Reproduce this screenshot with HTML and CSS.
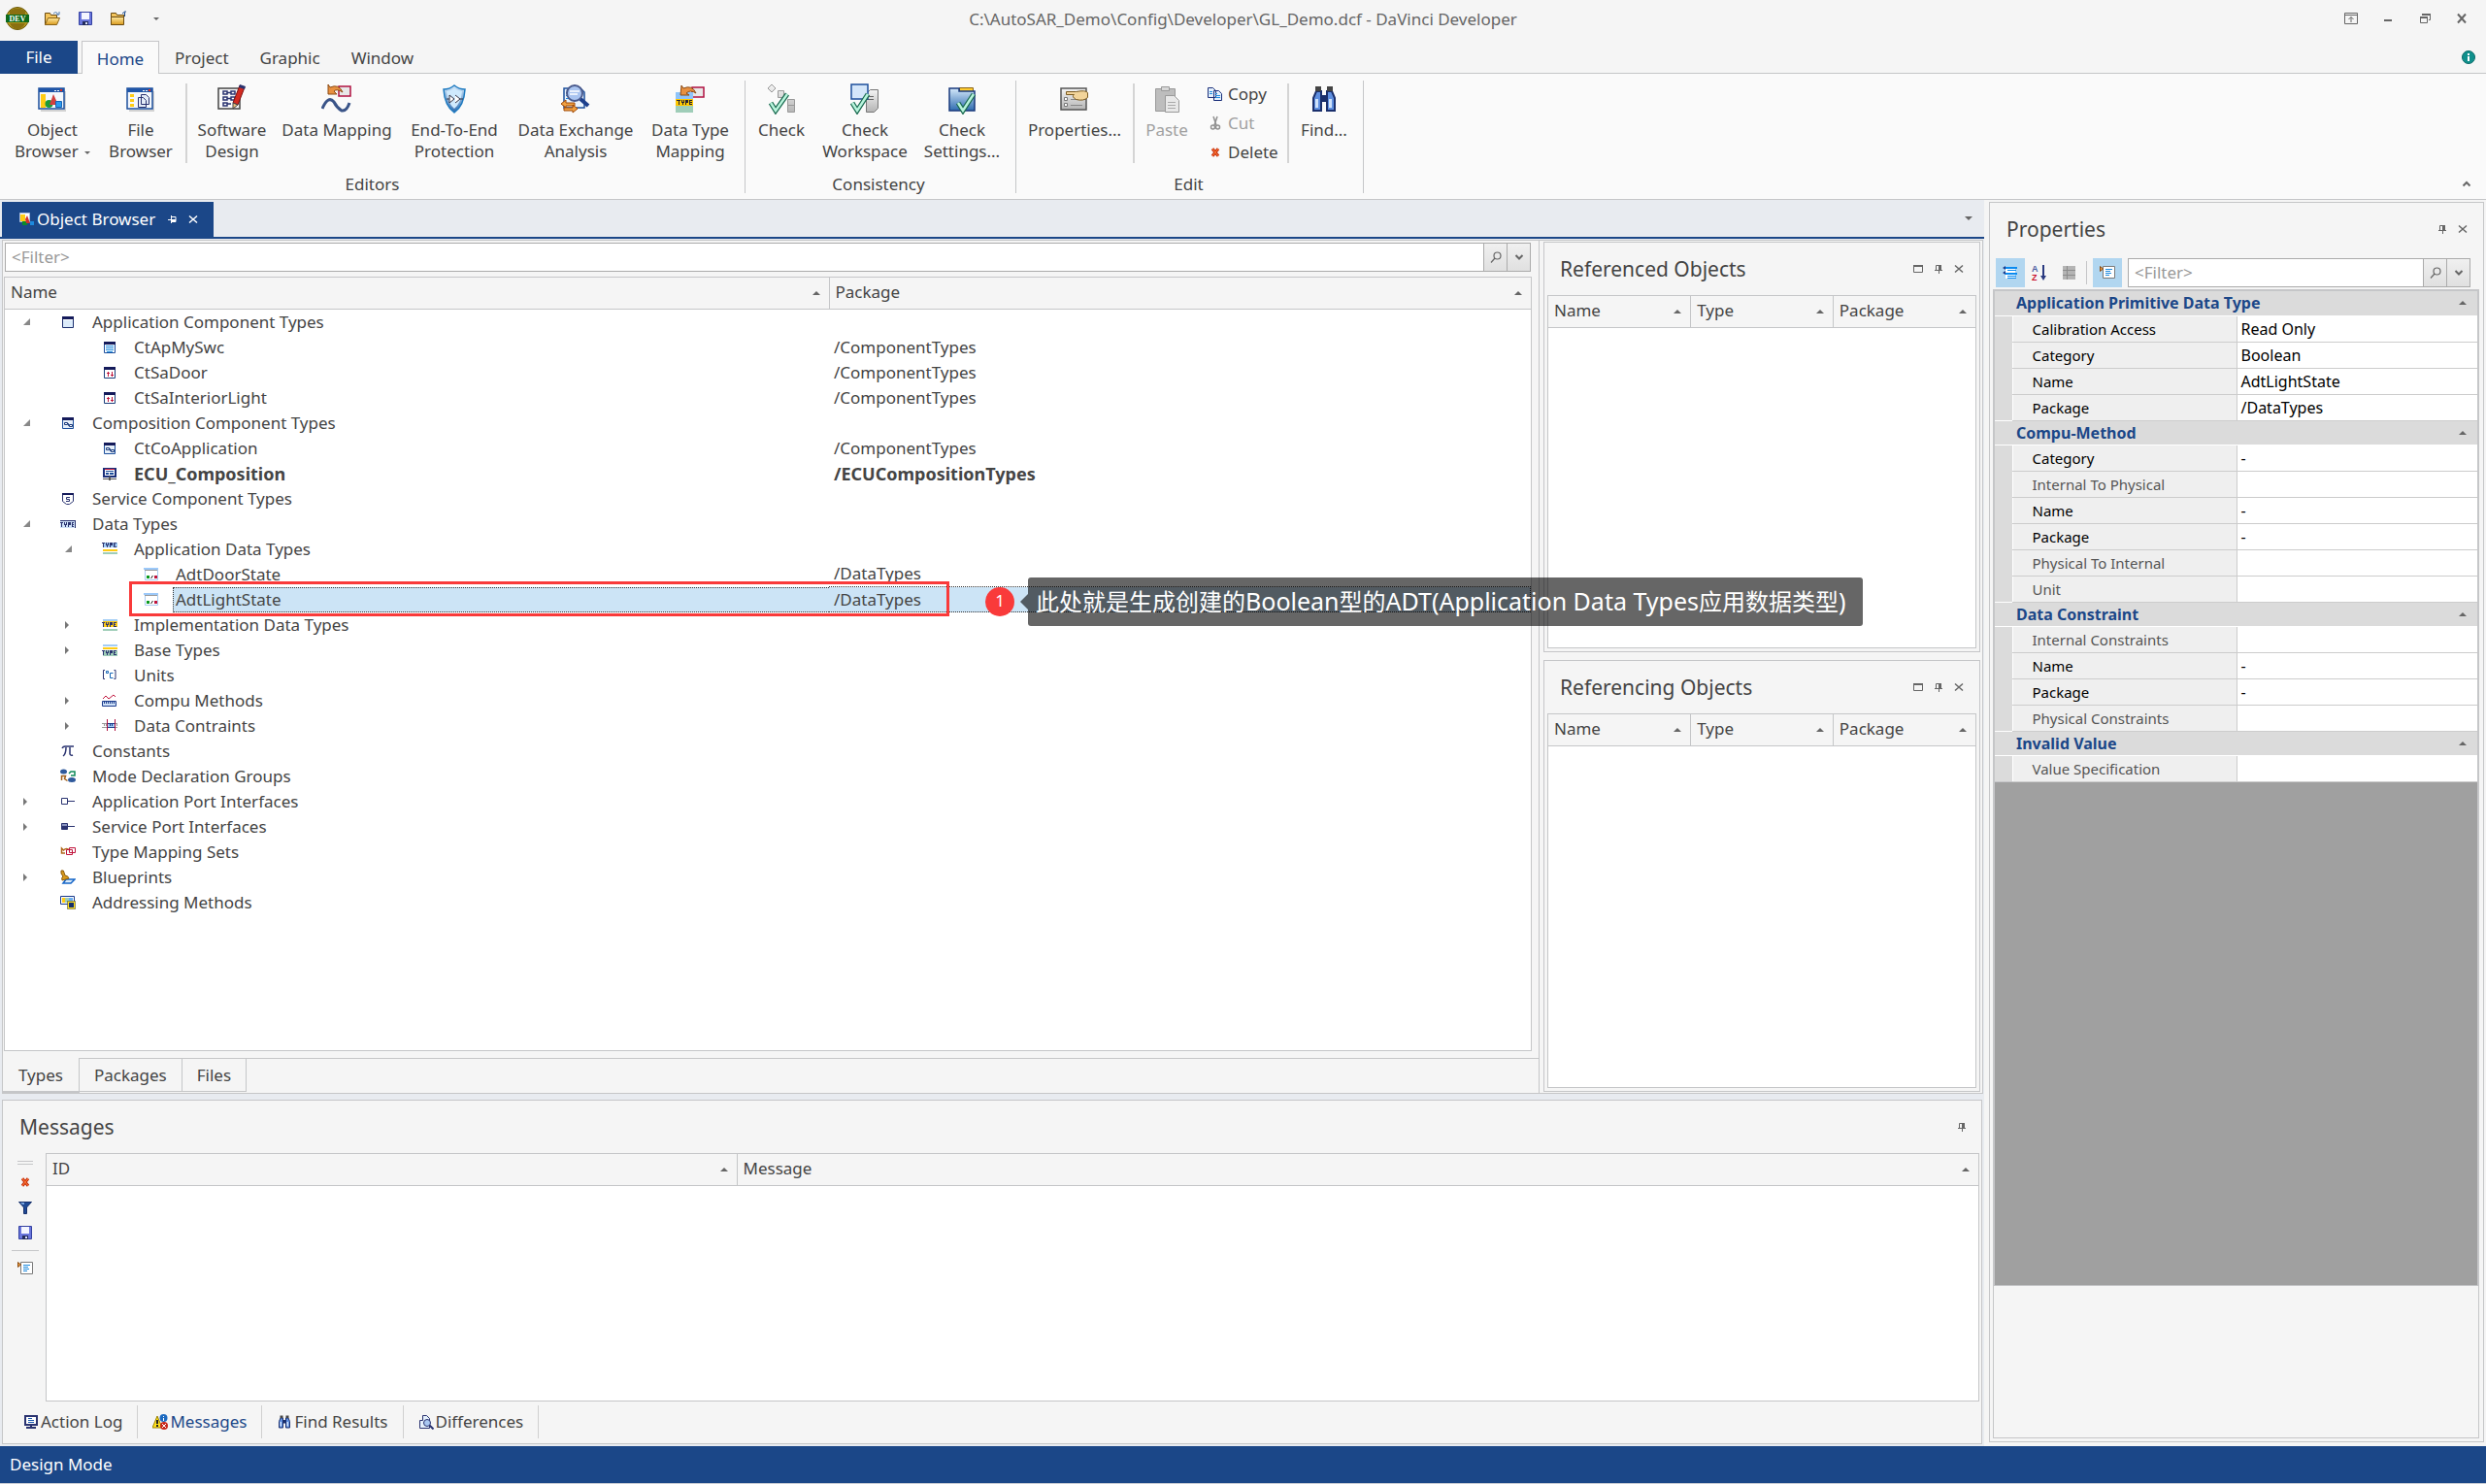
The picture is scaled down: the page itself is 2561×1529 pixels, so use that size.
FILE: index.html
```html
<!DOCTYPE html>
<html lang="en">
<head>
<meta charset="utf-8">
<title>C:\AutoSAR_Demo\Config\Developer\GL_Demo.dcf - DaVinci Developer</title>
<link rel="stylesheet" href="styles.css">
</head>
<body>
<svg class="defs" aria-hidden="true">
  <linearGradient id="steel" x1="0" y1="0" x2="0" y2="1"><stop offset="0" stop-color="#d4e8fa"/><stop offset="1" stop-color="#2f6cb0"/></linearGradient>
  <linearGradient id="grey" x1="0" y1="0" x2="0" y2="1"><stop offset="0" stop-color="#f4f4f4"/><stop offset="1" stop-color="#b5b5b5"/></linearGradient>
  <linearGradient id="gold" x1="0" y1="0" x2="0" y2="1"><stop offset="0" stop-color="#ffe9a0"/><stop offset="1" stop-color="#d99a1c"/></linearGradient>

  <!-- small icons, 16 x 16 -->
  <symbol id="app" viewBox="0 0 16 16"><path fill="#fff" stroke="#1c2f6e" d="M2.500 2.500h11v11h-11z"/><path fill="#dcecfb" d="M3 6h10v7H3z"/><path fill="#141a5a" d="M2 2h12v3H2z"/></symbol>
  <symbol id="swc" viewBox="0 0 16 16"><path fill="#fff" stroke="#1d4f9c" d="M2.500 2.500h11v11h-11z"/><path fill="#141a5a" d="M2 2h12v3H2z"/><path fill="#1d8ade" d="M4 6h8v1H4zM4 8h8v1H4zM4 10h8v1H4zM5 12h6v1H5z"/></symbol>
  <symbol id="sa" viewBox="0 0 16 16"><path fill="#fff" stroke="#1d3f7c" d="M2.500 2.500h11v11h-11z"/><path fill="#141a5a" d="M2 2h12v3H2z"/><path fill="#c0143c" d="M6 7h1v5H6zM5 8h3v1H5zM10 7h1v5h-1zM9 10h3v1H9z"/></symbol>
  <symbol id="co" viewBox="0 0 16 16"><path fill="#e6f0fa" stroke="#1d4f9c" d="M2.500 2.500h11v11h-11z"/><path fill="#141a5a" d="M2 2h12v3H2z"/><path fill="#fff" stroke="#1a3a7c" d="M4.500 7.500h3v2h-3zM9.500 9.500h3v2h-3zM7.500 8.500h1v2h1"/></symbol>
  <symbol id="ecu" viewBox="0 0 16 16"><path fill="#fff" stroke="#1a2f7a" stroke-width="2" d="M2 3h12v8H2z"/><path fill="#1d4f9c" d="M4 5h8v1H4zM4 7h3v2H4zM8 7h4v2H8z"/><path fill="#c0143c" d="M3 3h10v1H3z"/><path fill="#555" d="M1 13h14v1H1zM7 11h2v4H7z"/></symbol>
  <symbol id="svc" viewBox="0 0 16 16"><path fill="#fff" stroke="#2a3370" d="M2.500 2.500h11v8l-4 3h-3l-4-3z"/><path fill="#141a5a" d="M2 2h12v2H2z"/><path fill="none" stroke="#2a3370" d="M10 6.500H6.500v2h3v2H6"/></symbol>
  <symbol id="type" viewBox="0 0 16 16"><path fill="#cfe2f8" d="M0 4h16v8H0z"/><path fill="#2a3370" d="M0 4h16v1H0zM15 4h1v8h-1zM0 6h3v1H2v4H1V7H0zM4 6h1v2h1V6h1v3H6v2H5V9H4zM8 6h3v3H9v2H8zM12 6h2v1h-1v1h1v1h-1v1h1v1h-2z"/></symbol>
  <symbol id="adt" viewBox="0 0 16 16"><path fill="#a3cdf5" d="M1 1h15v5H1z"/><path fill="#ffcc14" d="M1 8h15v2H1z"/><path fill="#9fcdb8" d="M1 11h15v2H1z"/><path fill="#2a3370" d="M0 1h3v1H2v4H1V2H0zM4 1h1v2h1V1h1v3H6v2H5V4H4zM8 1h3v3H9v2H8zM12 1h3v1h-2v1h1v1h-1v1h2v1h-3z"/></symbol>
  <symbol id="idt" viewBox="0 0 16 16"><path fill="#a3cdf5" d="M1 2h15v2H1z"/><path fill="#ffcc14" d="M1 4h15v6H1z"/><path fill="#9fcdb8" d="M1 12h15v2H1z"/><path fill="#2a3370" d="M0 5h3v1H2v4H1V6H0zM4 5h1v2h1V5h1v3H6v2H5V8H4zM8 5h3v3H9v2H8zM12 5h3v1h-2v1h1v1h-1v1h2v1h-3z"/></symbol>
  <symbol id="base" viewBox="0 0 16 16"><path fill="#a3cdf5" d="M1 2h15v2H1z"/><path fill="#ffcc14" d="M1 5h15v2H1z"/><path fill="#9fcdb8" d="M1 8h15v6H1z"/><path fill="#2a3370" d="M0 8h3v1H2v4H1V9H0zM4 8h1v2h1V8h1v3H6v2H5v-2H4zM8 8h3v3H9v2H8zM12 8h3v1h-2v1h1v1h-1v1h2v1h-3z"/></symbol>
  <symbol id="prim" viewBox="0 0 16 16"><path fill="#fff" stroke="#a9cdf2" d="M1.500 1.500h13v12h-13z"/><path fill="#9cc9fa" d="M0 1h15v2H0z"/><path fill="#999" d="M1 3h13v1H1z"/><path fill="#0a9a1e" d="M3 9h3v3H3z"/><path fill="#c0143c" d="M11 9h3v3h-3z"/><path stroke="#222" d="M7.500 12l2-3"/></symbol>
  <symbol id="unit" viewBox="0 0 16 16"><path fill="none" stroke="#2a3370" d="M3 2.500H1.500v9H3M12.500 2.500H14v9h-1.500"/><path fill="none" stroke="#1565b8" d="M4.500 3.500h2v2h-2zM11.500 5.500h-3v5h3"/></symbol>
  <symbol id="compu" viewBox="0 0 16 16"><path fill="none" stroke="#c0143c" d="M1 6l3-3 3 3 5-4 2 2"/><path fill="#cfe2f8" stroke="#1a3a8c" d="M.5 8.500h14v5H.5z"/><path stroke="#1a3a8c" d="M2.500 9v2M4.500 9v2M6.500 9v2M8.500 9v2M10.500 9v2M12.500 9v2"/></symbol>
  <symbol id="constr" viewBox="0 0 16 16"><path fill="#a3cdf5" d="M6 5h7v4H6z"/><path stroke="#999" fill="none" d="M0 5.500h16M0 9.500h16M2.500 6v2M4.500 6v2M15.500 6v2"/><path stroke="#1a3a8c" fill="none" d="M6 5.500h7M8.500 6v2M10.500 6v2M6 9.500h7"/><path stroke="#b01040" d="M5.500 1v12M13.500 1v12"/></symbol>
  <symbol id="pi" viewBox="0 0 16 16"><path fill="none" stroke="#2a3370" stroke-width="1.500" d="M2 5q1-2 3-2h9M6 4q0 7-3 9M10 4v7q1 2 3 1"/></symbol>
  <symbol id="mode" viewBox="0 0 16 16"><ellipse cx="3.500" cy="3" rx="3.500" ry="2.500" fill="#2f5a9c"/><ellipse cx="12" cy="11.500" rx="4" ry="2.500" fill="#2f5a9c"/><path fill="none" stroke="#0f8a5a" stroke-width="1.500" d="M9 5l2-2h4v4h-4"/><path fill="none" stroke="#a0601c" stroke-width="1.500" d="M1.500 12V7.500h4l-1 3 3 2"/></symbol>
  <symbol id="port" viewBox="0 0 16 16"><path fill="#fff" stroke="#2a3370" d="M1.500 4.500h6v6h-6zM8 7.500h7"/></symbol>
  <symbol id="sport" viewBox="0 0 16 16"><path fill="#2a3370" stroke="#2a3370" d="M1.500 4.500h6v6h-6zM8 7.500h7"/><path fill="#8a94c0" d="M2 5h5v2H2z"/></symbol>
  <symbol id="tms" viewBox="0 0 16 16"><path fill="none" stroke="#b0681c" stroke-width="1.500" d="M5 9H1.500V4l2 2q3-3 6 0"/><path fill="#fff" stroke="#c0143c" d="M9.500 3.500h6v5h-6zM6.500 5.500h6v5h-6z"/></symbol>
  <symbol id="blue" viewBox="0 0 16 16"><path fill="#dcecfb" stroke="#1565c8" stroke-width="1.500" d="M3 14l3-4h9l-4 4z"/><path fill="#d99a1c" stroke="#8a5a0c" d="M1 1q3-1 3 2l1 3q3 0 4 3l-7 2q-1-3 1-4L1 4z"/></symbol>
  <symbol id="addr" viewBox="0 0 16 16"><path fill="#fff" stroke="#1a3a8c" d="M.5 1.500h14v8H.5z"/><path fill="#ffcc14" d="M2 3h3v5H2z"/><path fill="#9fcdb8" d="M5 3h4v5H5z"/><path fill="#6aaef0" d="M9 3h4v5H9z"/><path fill="#ffe01a" stroke="#333" stroke-dasharray="1 1" d="M7.500 6.500h8v8h-8z"/><path fill="#16306c" d="M9 8h5v5H9z"/></symbol>
  <symbol id="open" viewBox="0 0 16 16"><path fill="#f4c55c" stroke="#6a4a10" d="M.5 14.500v-12h5l1 2h6v3"/><path fill="url(#gold)" stroke="#8a6418" d="M.5 14.500l3-7h12l-3 7z"/><path fill="none" stroke="#4a7ab0" d="M9 3q3-3 5 1M15 1v3h-3"/></symbol>
  <symbol id="close-folder" viewBox="0 0 16 16"><path fill="#f4c55c" stroke="#6a4a10" d="M.5 14.500v-12h5l1 2h7v3"/><path fill="url(#gold)" stroke="#6a4a10" d="M.5 6.500h13v8H.5z"/><path fill="none" stroke="#1a4a8c" d="M14.500 6V1.500M12 3l2.500-2H16"/></symbol>
  <symbol id="save" viewBox="0 0 16 16"><path fill="#6a76dc" stroke="#3340a0" d="M1.500 1.500h13v13h-13z"/><path fill="#f4f6ff" d="M4 2h8v7H4z"/><path fill="#222c5c" d="M5 11h6v4H5z"/><path fill="#dfe4ff" d="M8 12h2v2H8z"/></symbol>
  <symbol id="del" viewBox="0 0 16 16"><path fill="none" stroke="#c02808" stroke-width="4" d="M4 3l8 10M12 3L4 13"/><path fill="none" stroke="#ff7a38" stroke-width="1.500" d="M4 3l8 10M12 3L4 13"/></symbol>
  <symbol id="copy" viewBox="0 0 16 16"><path fill="#e4f0fc" stroke="#1a2f7a" d="M.5 1.500h5l3 3v7h-8zM6.500 4.500h5l3 3v7h-8z"/><path stroke="#1d8ade" d="M2 5.500h3M2 7.500h3M8 9.500h5M8 11.500h5M8 7.500h2"/></symbol>
  <symbol id="cut" viewBox="0 0 16 16"><path fill="none" stroke="#909090" stroke-width="1.500" d="M6 1l3 9M10 1L7 10"/><circle cx="5.500" cy="12" r="2" fill="none" stroke="#909090" stroke-width="1.500"/><circle cx="10.500" cy="12" r="2" fill="none" stroke="#909090" stroke-width="1.500"/></symbol>
  <symbol id="funnel" viewBox="0 0 16 16"><path fill="#1f4a94" stroke="#16306c" d="M1.500 2.500h13L9.500 8v6.500h-3V8z"/><path fill="#7aa6e0" d="M3 3h4v2H5z"/></symbol>
  <symbol id="doc" viewBox="0 0 16 16"><path fill="#fff" stroke="#7a7a7a" d="M3.500 1.500h12v12h-12z"/><path stroke="#1d8ade" d="M6 4.500h7M6 6.500h5M6 8.500h6M6 10.500h4"/><path fill="#f0a040" stroke="#8a4a10" d="M.5 1.500l3 2.500-3 2.500z"/></symbol>
  <symbol id="log" viewBox="0 0 16 16"><path fill="#fff" stroke="#2a3370" stroke-width="2" d="M2 2h12v9H2z"/><path stroke="#1d5ab0" d="M5 4.500h4M5 6.500h6M5 8.500h6"/><path fill="#2a3370" d="M7 11h2v2H7zM3 13h10v2H3z"/></symbol>
  <symbol id="msg" viewBox="0 0 16 16"><path fill="#ffe01a" stroke="#9a8000" d="M5 2l5 12H0z"/><path stroke="#222" stroke-width="2" d="M5 6v4M5 11v2"/><circle cx="11.500" cy="4" r="4" fill="#1d6ac0"/><path fill="#fff" d="M11 2h1v1h-1zM11 4h1v3h-1z"/><circle cx="12" cy="12" r="4" fill="#c8281c"/><path stroke="#fff" d="M10 10l4 4M14 10l-4 4"/></symbol>
  <symbol id="diff" viewBox="0 0 16 16"><path fill="#e4f0fc" stroke="#2a3370" d="M1.500 14.500V6.500h3v-5h4l3 3v10z"/><circle cx="9" cy="9" r="3.500" fill="#a9c8f2" stroke="#2a3370"/><path stroke="#2a3370" stroke-width="2" d="M11.500 11.500l4 4"/></symbol>
  <symbol id="cats" viewBox="0 0 16 16"><path fill="#fff" d="M3 2h10v12H3z"/><path stroke="#0a8af0" stroke-width="2" d="M3 3h12M3 9h12"/><path stroke="#0a8af0" d="M5 5.500h9M5 11.500h9M5 13.500h9"/><path fill="#1a3a8c" d="M0 3l3-2v4zM0 8l3-2v4z"/></symbol>
  <symbol id="pages" viewBox="0 0 16 16"><path fill="#b4b4b4" d="M2 1h13v14H2z"/><path stroke="#8c8c8c" fill="none" d="M2 5.500h13M2 10.500h13M6.500 1v14"/></symbol>
  <symbol id="mag" viewBox="0 0 16 16"><circle cx="9.500" cy="6.500" r="3.500" fill="none" stroke="#666" stroke-width="1.200"/><path stroke="#666" stroke-width="1.200" d="M7 9l-4 4.500"/></symbol>
  <symbol id="down" viewBox="0 0 16 16"><path fill="none" stroke="#666" stroke-width="2" d="M4.500 6L8 9.500 11.500 6"/></symbol>
  <symbol id="x" viewBox="0 0 16 16"><path fill="none" stroke="currentColor" stroke-width="1.500" d="M4 4.500l8 7M12 4.500l-8 7"/></symbol>
  <symbol id="pin" viewBox="0 0 16 16"><path fill="none" stroke="currentColor" d="M5.500 9V4.500h4V9M4 9.500h8M8.500 10v3"/><path fill="currentColor" d="M8 4h3v5H8z"/></symbol>
  <symbol id="pinl" viewBox="0 0 16 16"><path fill="none" stroke="currentColor" d="M8 5.500h4v5H8M7.500 4v8M4 8.500h3"/><path fill="currentColor" d="M8 8h4v2H8z"/></symbol>
  <symbol id="maxi" viewBox="0 0 16 16"><path fill="none" stroke="currentColor" d="M3.500 4.500h9v7h-9z"/><path fill="currentColor" d="M3 4h10v2H3z"/></symbol>
  <symbol id="bino" viewBox="0 0 32 32"><path fill="#5f8fe0" stroke="#1a2f6c" stroke-width="2" d="M5 28V15l3-7h5v20zM19 28V8h5l3 7v13z"/><path fill="#1a2f6c" d="M13 12h6v7h-6z"/><path fill="#444" d="M7 3h6v5H7zM19 3h6v5h-6z"/><path fill="#cfe2fa" d="M7 16h3v9H7zM21 16h3v9h-3z"/></symbol>
  <symbol id="ob16" viewBox="0 0 16 16"><path fill="#fff" stroke="#a9bce0" d="M1.500 1.500h10v9h-10z"/><path fill="#ffcc14" d="M2 3h5v7H2z"/><path fill="#0a8a2a" d="M4 10h5v4H4z"/><path fill="#d03030" d="M7 8l2-4 3 8H8z"/><path fill="#1d8ade" d="M12 10h4v4h-4z"/></symbol>

  <!-- ribbon icons, 32 x 32 -->
  <symbol id="ob" viewBox="0 0 32 32"><path fill="#aaa" d="M4 29h26V8h-2v19H4z" opacity=".5"/><path fill="#f4f8fd" stroke="#1d4f9c" stroke-width="1.500" d="M2 5h26v21H2z"/><path fill="#1f55a8" d="M2 5h26v4H2z"/><path fill="#fff" d="M18 7h2v1h-2zM21 7h2v1h-2z"/><path fill="#e03020" d="M24 6h2v2h-2z"/><path fill="#ffcc14" d="M4 11h5v14H4z"/><circle cx="12.500" cy="21" r="4" fill="#1a9a3a"/><path fill="#d04040" d="M17 11l5 11h-9z"/><path fill="#2a9af0" stroke="#1565b8" d="M19.500 18.500h6v6h-6z"/></symbol>
  <symbol id="fb" viewBox="0 0 32 32"><path fill="#aaa" d="M4 29h26V8h-2v19H4z" opacity=".5"/><path fill="#f4f8fd" stroke="#1d4f9c" stroke-width="1.500" d="M2 5h26v21H2z"/><path fill="#1f55a8" d="M2 5h26v4H2z"/><path fill="#fff" d="M18 7h2v1h-2zM21 7h2v1h-2z"/><path fill="#e03020" d="M24 6h2v2h-2z"/><path fill="#ffcc14" d="M5 11h4v3H5zM5 16h4v3H5zM5 21h4v3H5z"/><path fill="#e4ecf8" stroke="#2a3370" d="M16.500 11.500h5l3 3v7h-8zM13.500 14.500h5l3 3v7h-8z"/></symbol>
  <symbol id="sd" viewBox="0 0 32 32"><path fill="#fafafa" stroke="#444" stroke-width="1.500" d="M2 5h22v21H2z"/><path fill="#fff" stroke="#2a3370" stroke-width="1.500" d="M7 8h4v3H7zM7 14h4v3H7zM7 20h4v3H7zM15 8h4v3h-4zM15 14h4v3h-4zM11 9.500h4M11 15.500h4M11 21h4"/><path fill="#d42a20" stroke="#7a1010" d="M24 2l5 2-7 18-5-2z"/><path fill="#e8c080" stroke="#444" d="M17 20l5 2-5 4z"/><path fill="#2a3370" d="M24 1l6 2-1 3-6-2z"/></symbol>
  <symbol id="dm" viewBox="0 0 32 32"><path fill="#e8e8e8" stroke="#b01040" stroke-width="1.500" d="M18 3h12v10H18z"/><path fill="#e89040" stroke="#8a4a14" d="M7 1l2 3q9-4 13 5-6-4-9-1l3 3H7z"/><path fill="none" stroke="#3a5488" stroke-width="3" d="M1 26q6-14 12-7 3 6 8 9 5 1 8-8"/></symbol>
  <symbol id="ee" viewBox="0 0 32 32"><path fill="url(#steel)" stroke="#1d7ac0" stroke-width="1.500" d="M16 2q5 4 11 4-1 17-11 24Q6 23 5 6q6 0 11-4z"/><path fill="#cfeafd" d="M16 5q4 3 8 3-1 12-8 18-7-6-8-18 4 0 8-3z"/><path fill="#fff" stroke="#334" d="M8 16h3m0-4v8l5-4zM17 12l5 4-5 4M22 16h3"/></symbol>
  <symbol id="de" viewBox="0 0 32 32"><path fill="#eaf4fe" stroke="#1d4f9c" stroke-width="1.500" d="M4 5h17l4 4v16H4z"/><path stroke="#1d8ade" d="M6 9.500h8M6 12.500h8M6 15.500h8"/><circle cx="15" cy="10" r="8" fill="#a9c4f0" stroke="#4a5a8c" stroke-width="2"/><path stroke="#fff" stroke-width="1.500" d="M10 8h10M10 11h8"/><path stroke="#1d3f8c" stroke-width="4" d="M21 16l8 7"/><path fill="#f0a040" stroke="#a04a08" d="M1 21l5-4v3h9v3H6v2zM18 26l-5-4v3H4v3h9v2z"/></symbol>
  <symbol id="dt" viewBox="0 0 32 32"><path fill="#e8e8e8" stroke="#b01040" stroke-width="1.500" d="M18 4h12v10H18z"/><path fill="#8fc4fa" d="M1 9h18v7H1z"/><path fill="#ffc800" d="M1 16h18v7H1z"/><path fill="#9fcdb8" d="M1 23h18v7H1z"/><path fill="#223" d="M2 17h4v1H5v4H4v-4H2zM7 17h1v2h1v-2h1v3H9v2H8v-2H7zM11 17h3v3h-2v2h-1zM15 17h3v1h-2v1h2v1h-2v1h2v1h-3z"/><path fill="#e89040" stroke="#8a4a14" d="M7 2l2 3q9-4 13 5-6-4-10 0l3 2H6z"/></symbol>
  <symbol id="ck" viewBox="0 0 32 32"><path fill="url(#grey)" stroke="#999" d="M6 1l4 4-4 4-4-4zM12.500 7.500h6v7h-6zM22.500 16.500h7v13h-7zM22.500 22.500h7"/><path fill="none" stroke="#1a6a50" stroke-width="5" d="M5 20l5 8L22 11"/><path fill="none" stroke="#b8f4dc" stroke-width="2.500" d="M5 20l5 8L22 11"/></symbol>
  <symbol id="cw" viewBox="0 0 32 32"><path fill="url(#grey)" stroke="#777" d="M17.500 10.500l4-4h8v19l-4 4h-8z"/><path stroke="#666" d="M18 13.500h7M18 16.500h7"/><path fill="#d4e6fa" stroke="#1d4f9c" stroke-width="1.500" d="M2 1h17v15H2z"/><path fill="none" stroke="#1a6a50" stroke-width="5" d="M3 20l5 8L19 11"/><path fill="none" stroke="#b8f4dc" stroke-width="2.500" d="M3 20l5 8L19 11"/></symbol>
  <symbol id="cs" viewBox="0 0 32 32"><path fill="#ffcc30" stroke="#8a6418" d="M13.500 4.500h14v4h-14z"/><path fill="url(#steel)" stroke="#1a3a7c" stroke-width="1.500" d="M3 5h10v3h16v20H3z"/><path fill="none" stroke="#1a6a50" stroke-width="5" d="M12 20l5 8L28 11"/><path fill="none" stroke="#b8f4dc" stroke-width="2.500" d="M12 20l5 8L28 11"/></symbol>
  <symbol id="pr" viewBox="0 0 32 32"><path fill="url(#grey)" stroke="#555" stroke-width="1.500" d="M2 5h26v22H2z"/><path fill="#fff" stroke="#777" d="M5.500 14.500h3v3h-3zM5.500 20.500h3v3h-3z"/><path stroke="#888" d="M12 16.500h12M12 22.500h12"/><path fill="#f2d49a" stroke="#7a5a20" d="M7.500 8.500h10q10-2 12 1v5q-4 4-12 2-5-3-2-5h-8z"/></symbol>
  <symbol id="pa" viewBox="0 0 32 32"><path fill="#bdbdbd" stroke="#999" d="M4.500 5.500h20v23h-20z"/><path fill="#d8d8d8" stroke="#999" d="M10.500 3.500h8v4h-8z"/><path fill="#e8e8e8" stroke="#999" d="M14.500 12.500h9l5 5v12h-14z"/><path stroke="#aaa" d="M17 19.500h8M17 22.500h8M17 25.500h8"/></symbol>
</svg>

<header class="titlebar">
  <div class="quick">
    <svg class="logo" viewBox="0 0 24 24"><circle cx="12" cy="12" r="11.500" fill="#b89a20" stroke="#6a5808"/><path fill="#8a7010" d="M4 4q8-5 16 0v4H4zM4 17h16q-3 6-8 6t-8-6z"/><path fill="#0d6a1a" d="M0 8h24v8H0z"/><text x="12" y="15" text-anchor="middle" class="logo-text">DEV</text></svg>
    <button aria-label="Open"><svg class="i16"><use href="#open"/></svg></button>
    <button aria-label="Save"><svg class="i16"><use href="#save"/></svg></button>
    <button aria-label="Close project"><svg class="i16"><use href="#close-folder"/></svg></button>
    <button aria-label="Customize" class="more"><i class="tri-down small"></i></button>
  </div>
  <h1>C:\AutoSAR_Demo\Config\Developer\GL_Demo.dcf - DaVinci Developer</h1>
  <div class="winbtns">
    <button aria-label="Ribbon options"><svg class="i16" viewBox="0 0 16 16"><path fill="none" stroke="currentColor" d="M1.500 2.500h13v11h-13zM1 4.500h14M8 12V6.500M5.500 9L8 6.500 10.500 9"/></svg></button>
    <button aria-label="Minimize"><svg class="i16" viewBox="0 0 16 16"><path fill="currentColor" d="M4 9h8v2H4z"/></svg></button>
    <button aria-label="Restore"><svg class="i16" viewBox="0 0 16 16"><path fill="none" stroke="currentColor" d="M5.500 5V3.500h8v6H12M3.500 6.500h7v6h-7z"/><path fill="currentColor" d="M3 6h8v2H3zM5 3h9v2H5z"/></svg></button>
    <button aria-label="Close"><svg class="i16" viewBox="0 0 16 16"><path fill="none" stroke="currentColor" stroke-width="2" d="M4 3.500l8 9M12 3.500l-8 9"/></svg></button>
  </div>
</header>

<nav class="ribbon-tabs">
  <button class="file">File</button>
  <button class="active">Home</button>
  <button>Project</button>
  <button>Graphic</button>
  <button>Window</button>
  <button class="info" aria-label="Info"><svg class="i16" viewBox="0 0 16 16"><circle cx="8" cy="8" r="6.500" fill="#10908c" stroke="#0a6a68"/><path fill="#fff" d="M7 4h2v2H7zM7 7h2v5H7z"/></svg></button>
</nav>

<section class="ribbon">
  <div class="group editors">
    <button class="big"><svg><use href="#ob"/></svg><span>Object<br>Browser <i class="tri-down small"></i></span></button>
    <button class="big"><svg><use href="#fb"/></svg><span>File<br>Browser</span></button>
    <i class="sep"></i>
    <button class="big"><svg><use href="#sd"/></svg><span>Software<br>Design</span></button>
    <button class="big"><svg><use href="#dm"/></svg><span>Data Mapping</span></button>
    <button class="big"><svg><use href="#ee"/></svg><span>End-To-End<br>Protection</span></button>
    <button class="big"><svg><use href="#de"/></svg><span>Data Exchange<br>Analysis</span></button>
    <button class="big"><svg><use href="#dt"/></svg><span>Data Type<br>Mapping</span></button>
    <div class="group-name">Editors</div>
  </div>
  <div class="group consistency">
    <button class="big"><svg><use href="#ck"/></svg><span>Check</span></button>
    <button class="big"><svg><use href="#cw"/></svg><span>Check<br>Workspace</span></button>
    <button class="big"><svg><use href="#cs"/></svg><span>Check<br>Settings...</span></button>
    <div class="group-name">Consistency</div>
  </div>
  <div class="group edit">
    <button class="big"><svg><use href="#pr"/></svg><span>Properties...</span></button>
    <i class="sep"></i>
    <button class="big off" disabled><svg><use href="#pa"/></svg><span>Paste</span></button>
    <div class="stack">
      <button><svg class="i16"><use href="#copy"/></svg>Copy</button>
      <button class="off" disabled><svg class="i16"><use href="#cut"/></svg>Cut</button>
      <button><svg class="i16 tiny"><use href="#del"/></svg>Delete</button>
    </div>
    <i class="sep"></i>
    <button class="big"><svg><use href="#bino"/></svg><span>Find...</span></button>
    <div class="group-name">Edit</div>
  </div>
  <button class="collapse" aria-label="Collapse ribbon"><svg class="i16" viewBox="0 0 16 16"><path fill="none" stroke="#666" stroke-width="2" d="M4.500 10.500L8 7l3.500 3.500"/></svg></button>
</section>

<main class="work">
  <div class="left">
    <div class="doc-tabs">
      <div class="doc-tab"><svg class="i16"><use href="#ob16"/></svg><span>Object Browser</span><button aria-label="Pin"><svg class="i16"><use href="#pinl"/></svg></button><button aria-label="Close tab"><svg class="i16"><use href="#x"/></svg></button></div>
      <button class="doc-menu" aria-label="Open documents"><i class="tri-down"></i></button>
    </div>
    <div class="doc-body">
      <section class="browser">
        <div class="filter">
          <input type="text" aria-label="Filter objects" placeholder="&lt;Filter&gt;">
          <button aria-label="Search"><svg class="i16"><use href="#mag"/></svg></button>
          <button aria-label="Filter history"><svg class="i16"><use href="#down"/></svg></button>
        </div>
        <div class="list">
          <table class="tree">
            <colgroup><col class="c-name"><col></colgroup>
            <thead><tr><th><span>Name</span></th><th><span>Package</span></th></tr></thead>
            <tbody>
              <tr><td><div class="node open"><svg class="i16"><use href="#app"/></svg><span>Application Component Types</span></div></td><td></td></tr>
              <tr><td><div class="node l1"><svg class="i16"><use href="#swc"/></svg><span>CtApMySwc</span></div></td><td>/ComponentTypes</td></tr>
              <tr><td><div class="node l1"><svg class="i16"><use href="#sa"/></svg><span>CtSaDoor</span></div></td><td>/ComponentTypes</td></tr>
              <tr><td><div class="node l1"><svg class="i16"><use href="#sa"/></svg><span>CtSaInteriorLight</span></div></td><td>/ComponentTypes</td></tr>
              <tr><td><div class="node open"><svg class="i16"><use href="#co"/></svg><span>Composition Component Types</span></div></td><td></td></tr>
              <tr><td><div class="node l1"><svg class="i16"><use href="#co"/></svg><span>CtCoApplication</span></div></td><td>/ComponentTypes</td></tr>
              <tr class="strong"><td><div class="node l1"><svg class="i16"><use href="#ecu"/></svg><span>ECU_Composition</span></div></td><td>/ECUCompositionTypes</td></tr>
              <tr><td><div class="node"><svg class="i16"><use href="#svc"/></svg><span>Service Component Types</span></div></td><td></td></tr>
              <tr><td><div class="node open"><svg class="i16"><use href="#type"/></svg><span>Data Types</span></div></td><td></td></tr>
              <tr><td><div class="node l1 open"><svg class="i16"><use href="#adt"/></svg><span>Application Data Types</span></div></td><td></td></tr>
              <tr><td><div class="node l2"><svg class="i16"><use href="#prim"/></svg><span>AdtDoorState</span></div></td><td>/DataTypes</td></tr>
              <tr class="selected"><td><div class="node l2"><svg class="i16"><use href="#prim"/></svg><span>AdtLightState</span></div></td><td>/DataTypes</td></tr>
              <tr><td><div class="node l1 shut"><svg class="i16"><use href="#idt"/></svg><span>Implementation Data Types</span></div></td><td></td></tr>
              <tr><td><div class="node l1 shut"><svg class="i16"><use href="#base"/></svg><span>Base Types</span></div></td><td></td></tr>
              <tr><td><div class="node l1"><svg class="i16"><use href="#unit"/></svg><span>Units</span></div></td><td></td></tr>
              <tr><td><div class="node l1 shut"><svg class="i16"><use href="#compu"/></svg><span>Compu Methods</span></div></td><td></td></tr>
              <tr><td><div class="node l1 shut"><svg class="i16"><use href="#constr"/></svg><span>Data Contraints</span></div></td><td></td></tr>
              <tr><td><div class="node"><svg class="i16"><use href="#pi"/></svg><span>Constants</span></div></td><td></td></tr>
              <tr><td><div class="node"><svg class="i16"><use href="#mode"/></svg><span>Mode Declaration Groups</span></div></td><td></td></tr>
              <tr><td><div class="node shut"><svg class="i16"><use href="#port"/></svg><span>Application Port Interfaces</span></div></td><td></td></tr>
              <tr><td><div class="node shut"><svg class="i16"><use href="#sport"/></svg><span>Service Port Interfaces</span></div></td><td></td></tr>
              <tr><td><div class="node"><svg class="i16"><use href="#tms"/></svg><span>Type Mapping Sets</span></div></td><td></td></tr>
              <tr><td><div class="node shut"><svg class="i16"><use href="#blue"/></svg><span>Blueprints</span></div></td><td></td></tr>
              <tr><td><div class="node"><svg class="i16"><use href="#addr"/></svg><span>Addressing Methods</span></div></td><td></td></tr>
            </tbody>
          </table>
        </div>
        <div class="sheet-tabs"><button class="active">Types</button><button>Packages</button><button>Files</button></div>
      </section>

      <div class="refs">
        <section class="pane upper">
          <div class="pane-head"><h2>Referenced Objects</h2><button aria-label="Maximize"><svg class="i16"><use href="#maxi"/></svg></button><button aria-label="Pin"><svg class="i16"><use href="#pin"/></svg></button><button aria-label="Close"><svg class="i16"><use href="#x"/></svg></button></div>
          <div class="list"><table><thead><tr><th><span>Name</span></th><th><span>Type</span></th><th><span>Package</span></th></tr></thead></table></div>
        </section>
        <section class="pane">
          <div class="pane-head"><h2>Referencing Objects</h2><button aria-label="Maximize"><svg class="i16"><use href="#maxi"/></svg></button><button aria-label="Pin"><svg class="i16"><use href="#pin"/></svg></button><button aria-label="Close"><svg class="i16"><use href="#x"/></svg></button></div>
          <div class="list"><table><thead><tr><th><span>Name</span></th><th><span>Type</span></th><th><span>Package</span></th></tr></thead></table></div>
        </section>
      </div>

      <div class="mark"></div>
      <div class="badge">1</div>
      <div class="callout" lang="zh">此处就是生成创建的<span>Boolean</span>型的<span>ADT(Application Data Types</span>应用数据类型<span>)</span></div>
    </div>

    <section class="messages">
      <div class="pane-head"><h2>Messages</h2><button aria-label="Pin"><svg class="i16"><use href="#pin"/></svg></button></div>
      <div class="msg-body">
        <div class="vtools">
          <i class="grip"></i>
          <button aria-label="Clear"><svg class="i16 tiny"><use href="#del"/></svg></button>
          <button aria-label="Filter"><svg class="i16"><use href="#funnel"/></svg></button>
          <button aria-label="Save messages"><svg class="i16"><use href="#save"/></svg></button>
          <i class="line"></i>
          <button aria-label="Details"><svg class="i16"><use href="#doc"/></svg></button>
        </div>
        <div class="list"><table><colgroup><col class="c-id"><col></colgroup><thead><tr><th><span>ID</span></th><th><span>Message</span></th></tr></thead></table></div>
      </div>
      <div class="msg-tabs">
        <button><svg class="i16"><use href="#log"/></svg>Action Log</button>
        <button class="active"><svg class="i16"><use href="#msg"/></svg>Messages</button>
        <button><svg class="i16"><use href="#bino"/></svg>Find Results</button>
        <button><svg class="i16"><use href="#diff"/></svg>Differences</button>
      </div>
    </section>
  </div>

  <aside class="props">
    <div class="pane-head"><h2>Properties</h2><button aria-label="Pin"><svg class="i16"><use href="#pin"/></svg></button><button aria-label="Close"><svg class="i16"><use href="#x"/></svg></button></div>
    <div class="ptools">
      <button class="on" aria-label="Categorized"><svg class="i16"><use href="#cats"/></svg></button>
      <button aria-label="Alphabetical"><svg class="i16 letters" viewBox="0 0 16 16"><text x="0" y="7" class="az a">A</text><text x="0" y="16" class="az z">Z</text><path stroke="#2a3a80" stroke-width="2" d="M12 0v13"/><path fill="#2a3a80" d="M9 11h6l-3 5z"/></svg></button>
      <button aria-label="Property pages"><svg class="i16"><use href="#pages"/></svg></button>
      <i class="vline"></i>
      <button class="on" aria-label="Description"><svg class="i16"><use href="#doc"/></svg></button>
      <div class="filter">
        <input type="text" aria-label="Filter properties" placeholder="&lt;Filter&gt;">
        <button aria-label="Search"><svg class="i16"><use href="#mag"/></svg></button>
        <button aria-label="Filter history"><svg class="i16"><use href="#down"/></svg></button>
      </div>
    </div>
    <div class="pgrid">
      <table>
        <colgroup><col class="c-gut"><col class="c-key"><col></colgroup>
        <tbody>
          <tr class="cat"><th colspan="3"><span>Application Primitive Data Type</span></th></tr>
          <tr><td></td><th>Calibration Access</th><td>Read Only</td></tr>
          <tr><td></td><th>Category</th><td>Boolean</td></tr>
          <tr><td></td><th>Name</th><td>AdtLightState</td></tr>
          <tr><td></td><th>Package</th><td>/DataTypes</td></tr>
          <tr class="cat"><th colspan="3"><span>Compu-Method</span></th></tr>
          <tr><td></td><th>Category</th><td>-</td></tr>
          <tr class="dim"><td></td><th>Internal To Physical</th><td></td></tr>
          <tr><td></td><th>Name</th><td>-</td></tr>
          <tr><td></td><th>Package</th><td>-</td></tr>
          <tr class="dim"><td></td><th>Physical To Internal</th><td></td></tr>
          <tr class="dim"><td></td><th>Unit</th><td></td></tr>
          <tr class="cat"><th colspan="3"><span>Data Constraint</span></th></tr>
          <tr class="dim"><td></td><th>Internal Constraints</th><td></td></tr>
          <tr><td></td><th>Name</th><td>-</td></tr>
          <tr><td></td><th>Package</th><td>-</td></tr>
          <tr class="dim"><td></td><th>Physical Constraints</th><td></td></tr>
          <tr class="cat"><th colspan="3"><span>Invalid Value</span></th></tr>
          <tr class="dim"><td></td><th>Value Specification</th><td></td></tr>
        </tbody>
      </table>
    </div>
    <div class="pdesc"></div>
  </aside>
</main>

<footer class="status">Design Mode</footer>
</body>
</html>
```
FILE: styles.css
```css
* { box-sizing: border-box; }
:root {
  --blue: #1b4788;
  --line: #c5c6c8;
  --panel: #f5f5f5;
  --text: #444;
}
html, body { height: 100%; }
body {
  margin: 0;
  display: flex;
  flex-direction: column;
  background: var(--panel);
  color: var(--text);
  font: 17px/22px "Noto Sans", "Noto Sans CJK SC", sans-serif;
  overflow: hidden;
}
button {
  border: 0; padding: 0; margin: 0; background: none;
  color: inherit; font: inherit; line-height: inherit;
  display: flex; align-items: center; justify-content: center;
}
h1, h2 { margin: 0; font-weight: normal; }
table { border-collapse: collapse; border-spacing: 0; width: 100%; table-layout: fixed; }
th, td { padding: 0; text-align: left; }
th { font-weight: normal; }
svg { flex: none; display: block; }
.defs { position: absolute; width: 0; height: 0; }
.i16 { width: 16px; height: 16px; }
.tiny { padding: 2px; }

.tri-down { width: 0; height: 0; border: 4px solid transparent; border-top-color: #666; border-bottom: 0; display: inline-block; }
.tri-down.small { border-width: 3px 3px 0; vertical-align: 3px; margin-left: 2px; }

/* title bar */
.titlebar { flex: none; height: 42px; display: grid; grid-template-columns: 1fr auto 1fr; align-items: start; }
.titlebar h1 { font-size: 17px; line-height: 40px; color: #666; }
.quick { display: flex; align-items: center; height: 38px; padding-left: 6px; gap: 18px; }
.logo { width: 24px; height: 24px; margin-right: -2px; }
.logo-text { font: bold 8px "Liberation Serif", serif; fill: #fff; }
.quick .more { margin-left: 8px; }
.winbtns { display: flex; justify-content: flex-end; align-items: center; height: 38px; gap: 22px; padding-right: 17px; color: #666; }

/* ribbon */
.ribbon-tabs { flex: none; height: 34px; display: flex; position: relative; box-shadow: inset 0 -1px var(--line); }
.ribbon-tabs button { padding: 2px 16px 0; }
.ribbon-tabs .file { background: var(--blue); color: #fff; width: 80px; margin-right: 4px; padding: 0; }
.ribbon-tabs .active { width: 80px; padding: 2px 0 0; background: #fafafa; border: 1px solid var(--line); border-bottom: 0; color: var(--blue); }
.ribbon-tabs .info { margin-left: auto; padding: 0 10px 0 0; }
.ribbon { flex: none; height: 130px; background: #fafafa; border-bottom: 1px solid var(--line); display: flex; padding: 7px 0 6px; }
.group { display: grid; grid-template-rows: 1fr 22px; padding: 3px 6px 0; border-right: 1px solid var(--line); }
.group-name { grid-column: 1 / -1; text-align: center; line-height: 26px; }
.editors { grid-template-columns: 96px 86px 7px 88px 128px 114px 136px 100px; }
.consistency { grid-template-columns: 62px 110px 90px; padding-right: 10px; }
.edit { grid-template-columns: 108px 13px 56px 92px 10px 64px; padding-right: 8px; }
.big { flex-direction: column; justify-content: flex-start; gap: 5px; white-space: nowrap; }
.big svg { width: 32px; height: 32px; }
.sep { width: 2px; height: 82px; background: #d4d4d4; justify-self: center; }
.stack { display: flex; flex-direction: column; padding-left: 14px; }
.stack button { justify-content: flex-start; gap: 5px; height: 30px; padding-bottom: 8px; }
.off { color: #a0a0a0; }
.collapse { margin: auto 12px 2px auto; }

/* work area */
.work { flex: 1; min-height: 0; display: grid; grid-template-columns: minmax(0, 1fr) 510px; padding: 0 2px 0 0; }
.left { display: flex; flex-direction: column; min-width: 0; background: #e8ebf0; margin-right: 5px; }
.doc-tabs { flex: none; display: flex; align-items: flex-end; justify-content: space-between; height: 40px; border-bottom: 2px solid var(--blue); padding-left: 2px; }
.doc-tab { height: 36px; width: 218px; background: var(--blue); color: #fff; display: flex; align-items: center; padding: 0 0 0 17px; white-space: nowrap; }
.doc-tab span { margin: 0 9px 0 3px; }
.doc-tab button + button { margin-left: 6px; }
.doc-menu { padding: 0 12px 17px; }
.doc-body { flex: 1; min-height: 0; display: flex; position: relative; margin: 1px 1px 0 2px; border: 1px solid var(--line); background: var(--panel); gap: 4px; }
.browser { flex: 1; min-width: 0; display: flex; flex-direction: column; border-right: 1px solid var(--line); padding-top: 2px; }
.filter { display: flex; height: 30px; border: 1px solid #ababab; background: #fff; }
.filter input { flex: 1; min-width: 0; border: 0; padding: 0 6px; font: inherit; background: none; outline: 0; }
.filter input::placeholder { color: #999; opacity: 1; }
.filter button { width: 24px; border-left: 1px solid #ababab; background: linear-gradient(#f0f0f0, #e0e0e0); }
.browser .filter { margin: 0 8px 5px 2px; }
.list { flex: 1; min-height: 0; background: #fff; border: 1px solid var(--line); }
.browser .list { margin: 0 7px 7px 1px; }
thead tr { height: 32px; }
thead th { background: var(--panel); border-bottom: 1px solid var(--line); padding: 0 10px 2px 6px; position: relative; }
thead th + th { border-left: 1px solid var(--line); }
thead th::after, .cat th::after {
  content: ""; position: absolute; right: 9px; top: 14px;
  border: 4px solid transparent; border-bottom-color: #666; border-top: 0;
}
.c-name { width: 849px; }
.tree tbody tr { height: 26px; }
.tree tbody td { padding: 0 0 0 5px; line-height: 24px; height: 26px; }
.tree tbody td:first-child { padding: 0; }
.node { display: flex; align-items: center; height: 26px; padding-left: 57px; position: relative; }
.node.l1 { padding-left: 100px; }
.node.l2 { padding-left: 143px; }
.node span { flex: 1; margin-left: 14px; padding-left: 3px; }
.node::before { position: absolute; margin-left: -38px; }
.open::before { content: ""; width: 7px; height: 7px; background: #888; clip-path: polygon(100% 0, 100% 100%, 0 100%); }
.shut::before { content: ""; border: 4px solid transparent; border-left-color: #777; border-right: 0; }
.strong { font-weight: bold; }
.strong .node span, .strong td { font-size: 18px; }
.selected td + td { background: #cce4f6; outline: 0; border: 1px dotted #333; border-left: 0; }
.selected .node span { background: #cce4f6; border: 1px dotted #333; border-right: 0; padding-left: 2px; }
.sheet-tabs { flex: none; display: flex; height: 36px; box-shadow: inset 0 1px var(--line); }
.sheet-tabs button { height: 35px; padding: 0 15px; border: 1px solid var(--line); border-left: 0; }
.sheet-tabs .active { height: 36px; padding: 2px 16px 0; background: var(--panel); border-top: 0; border-bottom-width: 2px; }

.refs { width: 452px; display: flex; flex-direction: column; gap: 8px; padding: 1px 2px 1px 0; }
.pane { flex: 20 1 0; display: flex; flex-direction: column; border: 1px solid var(--line); padding: 0 3px 3px; }
.pane.upper { flex-grow: 19; }
.pane-head { flex: none; display: flex; align-items: center; height: 54px; padding: 0 10px 0 13px; gap: 5px; color: #666; }
.pane-head h2 { flex: 1; font-size: 21px; line-height: 28px; color: var(--text); }

/* annotation over the tree */
.mark { position: absolute; left: 130px; top: 351px; width: 845px; height: 36px; border: 3px solid #f93a3a; }
.badge { position: absolute; left: 1012px; top: 357px; width: 30px; height: 30px; border-radius: 50%; background: #f93a3a; color: #fff; text-align: center; line-height: 28px; }
.callout { position: absolute; left: 1056px; top: 347px; height: 50px; padding: 0 17px 0 8px; border-radius: 3px; background: rgba(0, 0, 0, .6); color: #fff; font-size: 24px; line-height: 48px; white-space: nowrap; }
.callout span { font-size: 25px; }
.callout::before { content: ""; position: absolute; left: -8px; top: 17px; border: 8px solid transparent; border-right-color: rgba(0, 0, 0, .6); border-left: 0; }

/* messages */
.messages { flex: none; height: 355px; margin: 6px 2px 2px; border: 1px solid var(--line); background: var(--panel); display: flex; flex-direction: column; padding-right: 2px; }
.messages .pane-head { padding-left: 17px; }
.msg-body { flex: 1; min-height: 0; display: flex; }
.vtools { width: 44px; display: flex; flex-direction: column; align-items: center; padding: 8px 0 0 2px; gap: 10px; }
.vtools .grip { width: 16px; height: 4px; border: solid var(--line); border-width: 1px 0; }
.vtools .line { width: 28px; height: 1px; background: var(--line); }
.vtools button { height: 16px; }
.c-id { width: 711px; }
.msg-tabs { flex: none; display: flex; height: 43px; padding: 4px 0 5px 6px; }
.msg-tabs button { padding: 0 15px; gap: 2px; border-right: 1px solid #d0d0d0; }
.msg-tabs .active { color: var(--blue); }

/* properties */
.props { margin: 2px 0 4px; border: 1px solid var(--line); display: flex; flex-direction: column; padding: 0 4px 3px 3px; }
.props .pane-head { height: 57px; padding: 0 9px 3px 14px; }
.ptools { flex: none; display: flex; align-items: center; height: 30px; margin: 0 9px 2px 3px; }
.ptools > button { width: 30px; height: 30px; }
.ptools .on { background: #b1d6f0; }
.ptools .filter { flex: 1; margin-left: 6px; }
.vline { width: 1px; height: 24px; background: var(--line); margin: 0 6px 0 3px; }
.letters { overflow: visible; }
.az { font: bold 9px "Liberation Sans", sans-serif; }
.a { fill: #4a5aa0; }
.z { fill: #c8102c; }
.pgrid { flex: 1; min-height: 0; background: #a0a0a0; border: 2px solid var(--line); border-bottom-width: 1px; font-size: 16px; color: #000; }
.pgrid table { background: #fff; border-bottom: 1px solid var(--line); }
.c-gut { width: 18px; }
.c-key { width: 231px; }
.pgrid tr { height: 27px; }
.pgrid td:first-child { background: #dbdbdb; border-bottom: 0; }
.pgrid tr:not(.cat) th { font-size: 15px; background: #efefef; border-left: 1px solid #fff; border-right: 1px solid #ccc; padding-left: 20px; }
.pgrid td, .pgrid tr:not(.cat) th { border-bottom: 1px solid #ccc; line-height: 22px; }
.pgrid td:last-child { padding-left: 4px; }
.pgrid .cat { height: 25px; }
.pgrid .cat th { background: #dbdbdb; color: var(--blue); font-weight: bold; padding-left: 22px; position: relative; line-height: 22px; border-bottom: 1px solid #fff; border-top: 1px solid #fff; }
.pgrid .cat:first-child th { border-top: 0; }
.pgrid .cat th::after { right: 11px; top: 10px; }
.pgrid .dim th { color: #555; }
.pdesc { flex: none; height: 157px; border: 1px solid var(--line); border-top: 0; }

.status { flex: none; height: 39px; background: var(--blue); color: #fff; line-height: 38px; padding-left: 10px; border-bottom: 1px solid #c8ccd4; }
```
